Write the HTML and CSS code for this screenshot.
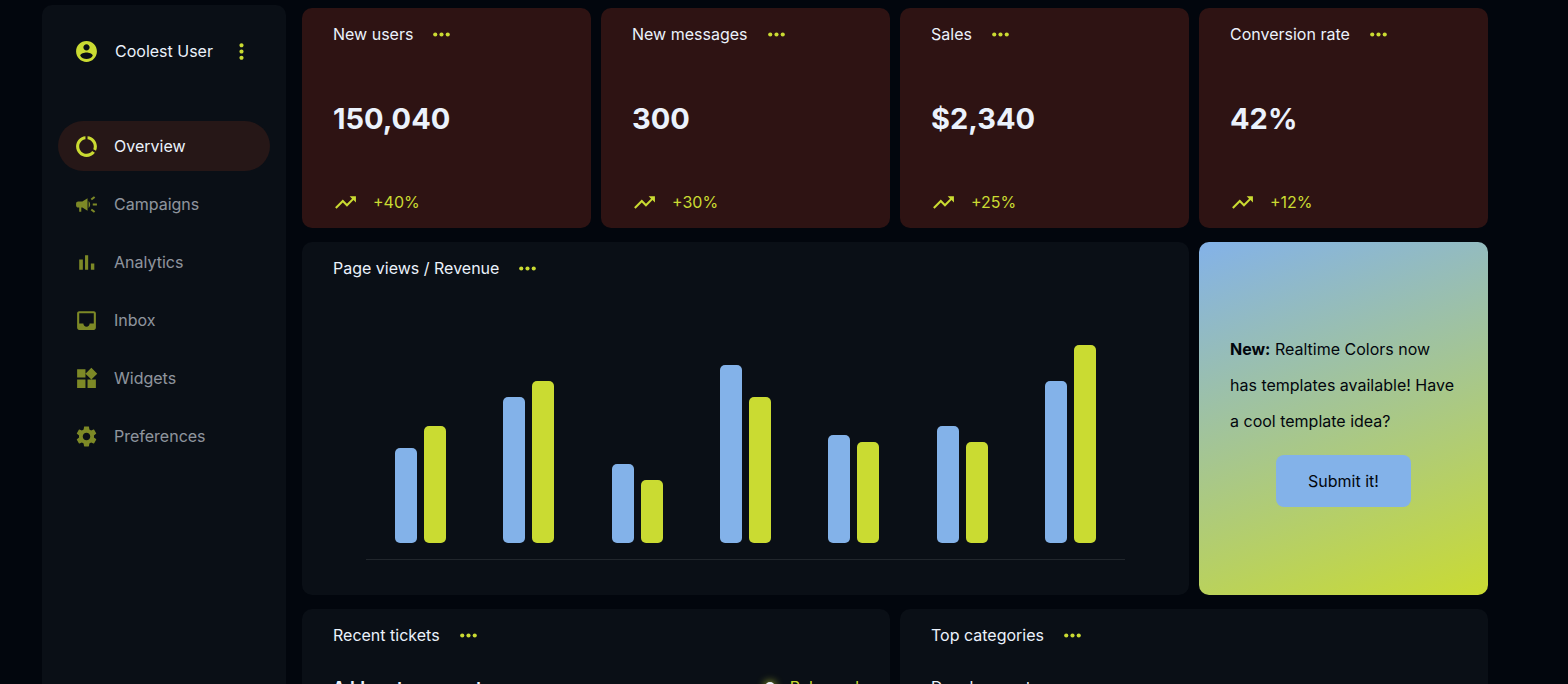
FILE: index.html
```html
<!DOCTYPE html>
<html lang="en">
<head>
<meta charset="utf-8">
<title>Dashboard</title>
<meta name="viewport" content="width=device-width, initial-scale=1">
<link rel="stylesheet" href="styles.css">
</head>
<body>
<svg class="sprite" aria-hidden="true">
  <symbol id="more" viewBox="0 0 24 24"><circle cx="6" cy="12" r="2"/><circle cx="12" cy="12" r="2"/><circle cx="18" cy="12" r="2"/></symbol>
  <symbol id="more-vert" viewBox="0 0 24 24"><path d="M12 8c1.100 0 2-.9 2-2s-.9-2-2-2-2 .9-2 2 .9 2 2 2zm0 2c-1.100 0-2 .9-2 2s.9 2 2 2 2-.9 2-2-.9-2-2-2zm0 6c-1.100 0-2 .9-2 2s.9 2 2 2 2-.9 2-2-.9-2-2-2z"/></symbol>
  <symbol id="account" viewBox="0 0 24 24"><path d="M12 2C6.480 2 2 6.480 2 12s4.480 10 10 10 10-4.480 10-10S17.520 2 12 2zm0 3c1.660 0 3 1.340 3 3s-1.340 3-3 3-3-1.340-3-3 1.340-3 3-3zm0 14.200c-2.500 0-4.710-1.280-6-3.220.03-1.990 4-3.080 6-3.080 1.990 0 5.970 1.090 6 3.080-1.290 1.940-3.500 3.220-6 3.220z"/></symbol>
  <symbol id="usage" viewBox="0 0 24 24"><path d="M13 2.050v3.030c3.390.49 6 3.390 6 6.920 0 .9-.18 1.750-.48 2.540l2.600 1.530c.56-1.240.88-2.620.88-4.070 0-5.180-3.950-9.450-9-9.950zM12 19c-3.870 0-7-3.130-7-7 0-3.530 2.610-6.430 6-6.920V2.050c-5.060.5-9 4.760-9 9.950 0 5.520 4.470 10 9.990 10 3.310 0 6.240-1.610 8.060-4.090l-2.600-1.530C16.170 17.980 14.210 19 12 19z"/></symbol>
  <symbol id="campaign" viewBox="0 0 24 24"><path d="M18 11v2h4v-2h-4zM16 17.610c.96.71 2.210 1.650 3.200 2.390.4-.53.8-1.070 1.200-1.600-.99-.74-2.240-1.680-3.200-2.400-.4.540-.8 1.080-1.200 1.610zM20.400 5.600c-.4-.53-.8-1.070-1.200-1.600-.99.740-2.240 1.680-3.200 2.400.4.530.8 1.070 1.200 1.600.96-.72 2.210-1.650 3.200-2.400zM4 9c-1.100 0-2 .9-2 2v2c0 1.100.9 2 2 2h1v4h2v-4h1l5 3V6L8 9H4zM15.500 12c0-1.330-.58-2.530-1.500-3.350v6.690c.92-.81 1.500-2.010 1.500-3.340z"/></symbol>
  <symbol id="analytics" viewBox="0 0 24 24"><path d="M5 9.200h3.500V19H5zM10.600 5h3v14h-3zM16.200 13H19.500v6h-3.300z"/></symbol>
  <symbol id="inbox" viewBox="0 0 24 24"><path d="M19 3H5c-1.100 0-2 .9-2 2v14c0 1.100.89 2 2 2h14c1.100 0 2-.9 2-2V5c0-1.100-.9-2-2-2zm0 12h-4c0 1.660-1.350 3-3 3s-3-1.340-3-3H5V5h14v10z"/></symbol>
  <symbol id="widgets" viewBox="0 0 24 24"><path d="M13 13v8h8v-8h-8zM3 21h8v-8H3v8zM3 3v8h8V3H3zm13.660-1.310L11 7.340 16.660 13l5.660-5.660-5.660-5.650z"/></symbol>
  <symbol id="settings" viewBox="0 0 24 24"><path d="M19.140 12.940c.04-.3.060-.61.060-.94 0-.32-.02-.64-.07-.94l2.030-1.580c.18-.14.23-.41.120-.61l-1.920-3.320c-.12-.22-.37-.29-.59-.22l-2.390.96c-.5-.38-1.030-.7-1.620-.94l-.36-2.540c-.04-.24-.24-.41-.48-.41h-3.840c-.24 0-.43.170-.47.410l-.36 2.540c-.59.240-1.130.570-1.620.940l-2.390-.96c-.22-.08-.47 0-.59.220L2.740 8.870c-.12.210-.08.470.12.610l2.030 1.580c-.05.300-.09.630-.09.940s.02.640.07.940l-2.030 1.580c-.18.140-.23.410-.12.610l1.920 3.320c.12.220.37.290.59.220l2.390-.96c.5.380 1.030.7 1.620.94l.36 2.540c.05.240.24.410.48.410h3.840c.24 0 .44-.17.47-.41l.36-2.540c.59-.24 1.130-.56 1.620-.94l2.390.96c.22.080.47 0 .59-.22l1.920-3.320c.12-.22.070-.47-.12-.61l-2.010-1.580zM12 15.600c-1.980 0-3.600-1.620-3.600-3.600s1.620-3.600 3.600-3.600 3.600 1.620 3.600 3.600-1.620 3.600-3.600 3.600z"/></symbol>
  <symbol id="trend" viewBox="0 0 24 24"><path d="M16 6l2.290 2.290-4.880 4.880-4-4L2 16.590 3.410 18l6-6 4 4 6.300-6.290L22 12V6z"/></symbol>
</svg>

<div class="app">
  <aside class="sidebar">
    <div class="user">
      <svg class="icon"><use href="#account"/></svg>
      <span>Coolest User</span>
      <button class="icon-button" type="button" aria-label="Account menu"><svg class="icon"><use href="#more-vert"/></svg></button>
    </div>
    <nav class="nav">
      <a class="nav-item active" href="#"><svg class="icon"><use href="#usage"/></svg>Overview</a>
      <a class="nav-item" href="#"><svg class="icon"><use href="#campaign"/></svg>Campaigns</a>
      <a class="nav-item" href="#"><svg class="icon"><use href="#analytics"/></svg>Analytics</a>
      <a class="nav-item" href="#"><svg class="icon"><use href="#inbox"/></svg>Inbox</a>
      <a class="nav-item" href="#"><svg class="icon"><use href="#widgets"/></svg>Widgets</a>
      <a class="nav-item" href="#"><svg class="icon"><use href="#settings"/></svg>Preferences</a>
    </nav>
  </aside>

  <main class="grid">
    <section class="card stat">
      <header class="card-head"><h2>New users</h2><button class="icon-button" type="button" aria-label="New users options"><svg class="icon"><use href="#more"/></svg></button></header>
      <p class="value">150,040</p>
      <p class="trend"><svg class="icon"><use href="#trend"/></svg>+40%</p>
    </section>
    <section class="card stat">
      <header class="card-head"><h2>New messages</h2><button class="icon-button" type="button" aria-label="New messages options"><svg class="icon"><use href="#more"/></svg></button></header>
      <p class="value">300</p>
      <p class="trend"><svg class="icon"><use href="#trend"/></svg>+30%</p>
    </section>
    <section class="card stat">
      <header class="card-head"><h2>Sales</h2><button class="icon-button" type="button" aria-label="Sales options"><svg class="icon"><use href="#more"/></svg></button></header>
      <p class="value">$2,340</p>
      <p class="trend"><svg class="icon"><use href="#trend"/></svg>+25%</p>
    </section>
    <section class="card stat">
      <header class="card-head"><h2>Conversion rate</h2><button class="icon-button" type="button" aria-label="Conversion rate options"><svg class="icon"><use href="#more"/></svg></button></header>
      <p class="value">42%</p>
      <p class="trend"><svg class="icon"><use href="#trend"/></svg>+12%</p>
    </section>

    <section class="card chart">
      <header class="card-head"><h2>Page views / Revenue</h2><button class="icon-button" type="button" aria-label="Chart options"><svg class="icon"><use href="#more"/></svg></button></header>
      <div class="plot">
        <div class="pair"><div class="bar views" style="height:95px"></div><div class="bar revenue" style="height:117px"></div></div>
        <div class="pair"><div class="bar views" style="height:146px"></div><div class="bar revenue" style="height:162px"></div></div>
        <div class="pair"><div class="bar views" style="height:79px"></div><div class="bar revenue" style="height:63px"></div></div>
        <div class="pair"><div class="bar views" style="height:178px"></div><div class="bar revenue" style="height:146px"></div></div>
        <div class="pair"><div class="bar views" style="height:108px"></div><div class="bar revenue" style="height:101px"></div></div>
        <div class="pair"><div class="bar views" style="height:117px"></div><div class="bar revenue" style="height:101px"></div></div>
        <div class="pair"><div class="bar views" style="height:162px"></div><div class="bar revenue" style="height:198px"></div></div>
      </div>
    </section>

    <section class="card promo">
      <p><strong>New:</strong> Realtime Colors now has templates available! Have a cool template idea?</p>
      <button class="submit" type="button">Submit it!</button>
    </section>

    <section class="card half">
      <header class="card-head"><h2>Recent tickets</h2><button class="icon-button" type="button" aria-label="Recent tickets options"><svg class="icon"><use href="#more"/></svg></button></header>
      <div class="row"><strong>Add custom export</strong><span class="status"><span class="dot"></span>Released</span></div>
    </section>
    <section class="card half">
      <header class="card-head"><h2>Top categories</h2><button class="icon-button" type="button" aria-label="Top categories options"><svg class="icon"><use href="#more"/></svg></button></header>
      <div class="row">Development</div>
    </section>
  </main>
</div>
</body>
</html>
```

FILE: styles.css
```css
:root {
  --text: #ebf2fc;
  --background: #02060d;
  --panel: #0a0f16;
  --primary: #cadb32;
  --accent: #83b2e9;
  --stat: #2e1313;
}

* {
  box-sizing: border-box;
}

body {
  margin: 0;
  background: var(--background);
  color: var(--text);
  font: 16px/24px Inter, "Liberation Sans", sans-serif;
}

h2,
p {
  margin: 0;
  font-size: 16px;
  font-weight: 400;
}

button {
  border: 0;
  font: inherit;
  cursor: pointer;
}

.sprite {
  display: none;
}

.icon {
  display: block;
  flex: none;
  width: 25px;
  height: 25px;
  fill: var(--primary);
}

.icon-button {
  padding: 0;
  background: none;
}

.app {
  display: flex;
  gap: 16px;
  height: 100vh;
  padding: 0 80px 0 42px;
  overflow: hidden;
}

.sidebar {
  flex: none;
  width: 244px;
  margin-top: 5px;
  padding: 16px;
  border-radius: 10px 10px 0 0;
  background: var(--panel);
}

.user {
  display: flex;
  align-items: center;
  gap: 16px;
  height: 60px;
  padding: 0 16px;
}

.nav {
  display: grid;
  gap: 8px;
  margin-top: 40px;
}

.nav-item {
  display: flex;
  align-items: center;
  gap: 15px;
  height: 50px;
  padding: 0 16px;
  border-radius: 25px;
  color: rgba(235, 242, 252, 0.6);
  text-decoration: none;
}

.nav-item .icon {
  opacity: 0.6;
}

.nav-item.active {
  background: #261717;
  color: var(--text);
}

.nav-item.active .icon {
  opacity: 1;
}

.grid {
  flex: 1;
  display: grid;
  grid-template-columns: repeat(4, minmax(0, 1fr));
  align-content: start;
  gap: 14px 10px;
  padding-top: 8px;
}

.card {
  padding: 14px 31px;
  border-radius: 10px;
  background: var(--panel);
}

.card-head {
  display: flex;
  align-items: center;
  gap: 16px;
  height: 24px;
}

.stat {
  display: flex;
  flex-direction: column;
  justify-content: space-between;
  min-height: 220px;
  background: var(--stat);
}

.value {
  padding-top: 2px;
  font-size: 29px;
  font-weight: 700;
  line-height: 36px;
}

.trend {
  display: flex;
  align-items: center;
  gap: 15px;
  height: 24px;
  color: var(--primary);
}

.chart {
  grid-column: span 3;
  display: flex;
  flex-direction: column;
  min-height: 353px;
  padding-bottom: 35px;
}

.plot {
  display: flex;
  align-items: flex-end;
  justify-content: space-around;
  margin: auto 33px 0;
  padding-bottom: 16px;
  border-bottom: 1px solid #21262c;
}

.pair {
  display: flex;
  align-items: flex-end;
  gap: 7px;
}

.bar {
  width: 22px;
  border-radius: 5px;
}

.views {
  background: var(--accent);
}

.revenue {
  background: var(--primary);
}

.promo {
  display: flex;
  flex-direction: column;
  align-items: center;
  justify-content: center;
  gap: 16px;
  background: linear-gradient(160deg, var(--accent), var(--primary));
  color: var(--background);
  line-height: 36px;
}

.submit {
  padding: 14px 32px;
  border-radius: 8px;
  background: var(--accent);
  color: var(--background);
  line-height: 24px;
}

.half {
  grid-column: span 2;
}

.row {
  display: flex;
  align-items: center;
  justify-content: space-between;
  margin-top: 28px;
}

.status {
  display: flex;
  align-items: center;
  gap: 15px;
  color: var(--primary);
}

.dot {
  width: 10px;
  height: 10px;
  border-radius: 50%;
  background: var(--text);
  box-shadow: 0 0 8px var(--primary);
}
```
